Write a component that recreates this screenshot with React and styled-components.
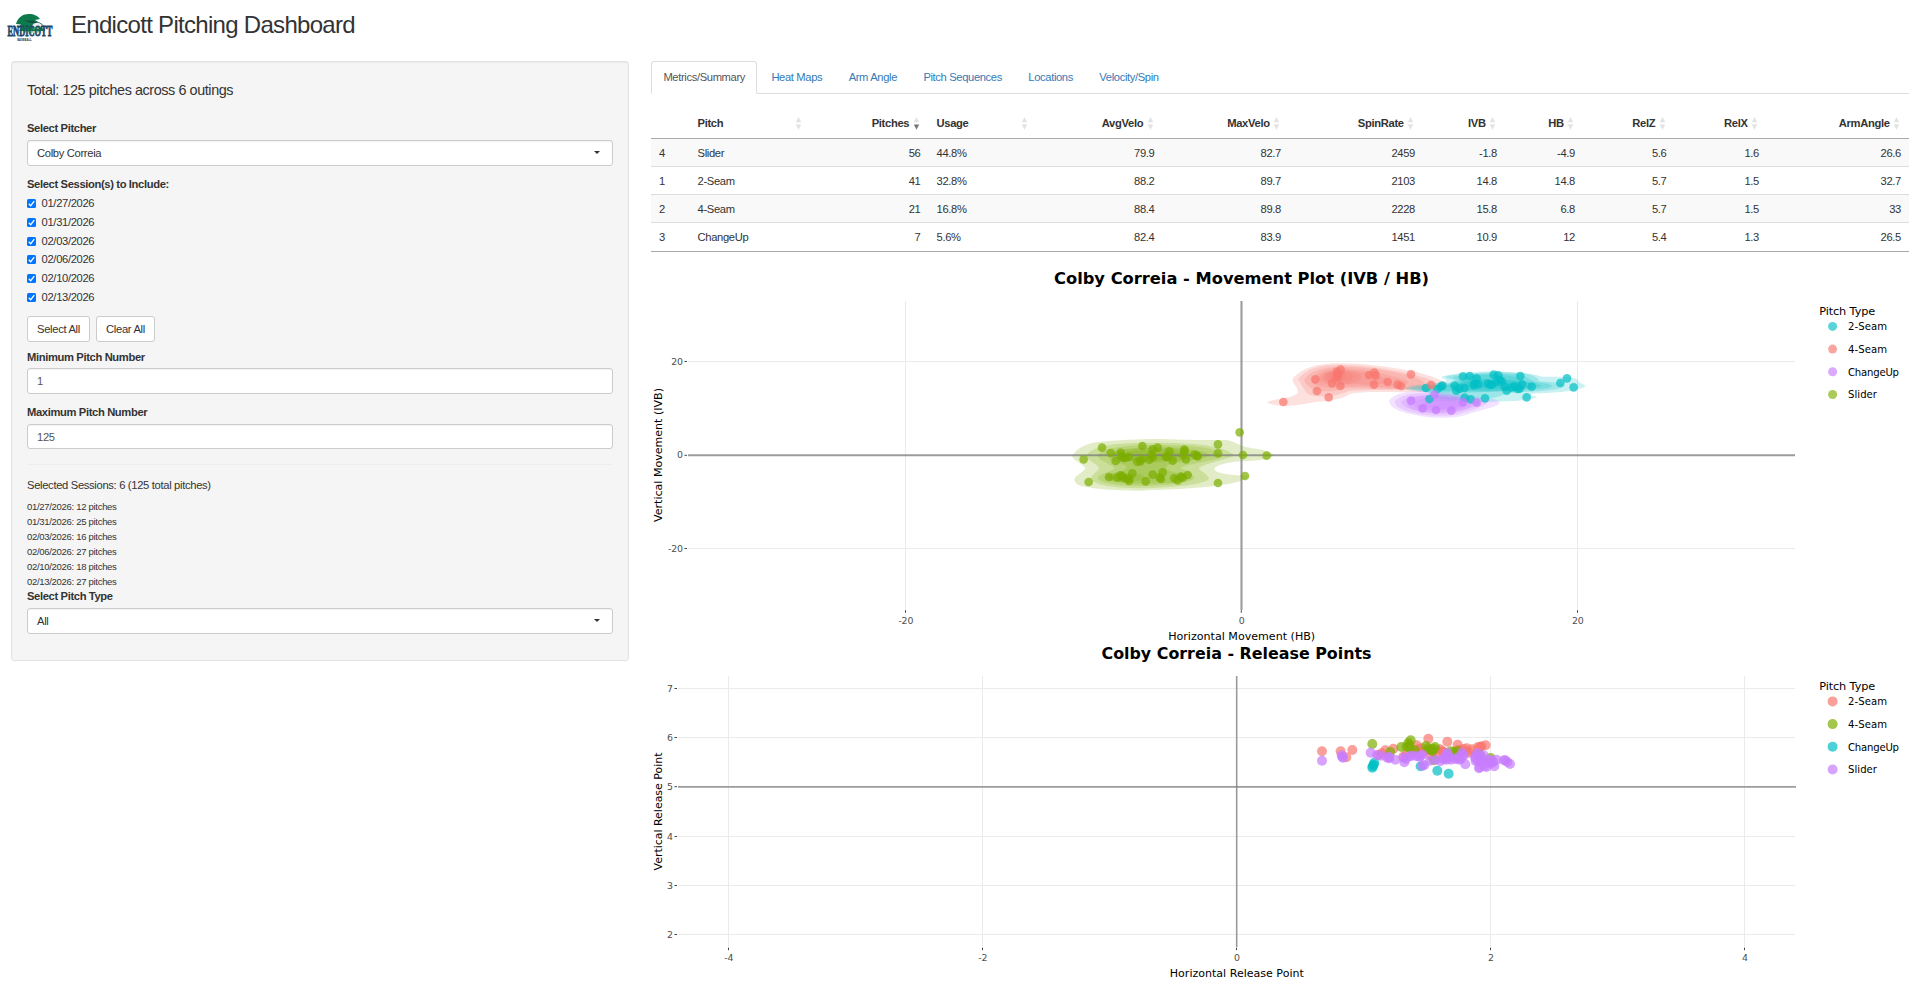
import React from "react";
import styled, { createGlobalStyle } from "styled-components";

const GlobalStyle = createGlobalStyle`
  *, *::before, *::after { box-sizing: border-box; }
  body {
    margin: 0;
    background: #fff;
    color: #333;
    font: 11.2px/16px "Liberation Sans", Arial, sans-serif;
    letter-spacing: -0.32px;
    overflow: hidden;
  }
`;

const Page = styled.div`
  width: 1918px;
  height: 982px;
  overflow: hidden;
`;

const Header = styled.header`
  display: flex;
  align-items: flex-start;
  height: 61px;
  padding-left: 7px;
`;

const Logo = styled.svg`
  width: 48px;
  height: 32px;
  margin-top: 13px;
  overflow: visible;
  letter-spacing: 0;
`;

const LogoName = styled.text`
  font-family: "Liberation Serif", serif;
  font-size: 14px;
  font-weight: 700;
  fill: #1f4668;
  stroke: #1f4668;
  stroke-width: 0.8px;
`;

const LogoSport = styled.text`
  font-family: "Liberation Sans", sans-serif;
  font-size: 3.6px;
  font-weight: 700;
  fill: #20334d;
`;

const Title = styled.h2`
  margin: 11px 0 0 16px;
  font-size: 24px;
  font-weight: 400;
  line-height: 27px;
  letter-spacing: -0.7px;
`;

const Columns = styled.main`
  display: grid;
  grid-template-columns: 618px 1258px;
  column-gap: 22px;
  align-items: start;
  padding-left: 11px;
`;

const Well = styled.form`
  display: flex;
  flex-direction: column;
  height: 600px;
  padding: 20px 15px 0;
  background: #f5f5f5;
  border: 1px solid #e3e3e3;
  border-radius: 3px;
  box-shadow: inset 0 1px 1px rgba(0, 0, 0, 0.05);
`;

const Total = styled.h4`
  margin: 0 0 21px;
  font-size: 14.4px;
  font-weight: 400;
  line-height: 17px;
  letter-spacing: -0.42px;
`;

const Label = styled.label`
  font-weight: 700;
  line-height: 16px;
  letter-spacing: -0.36px;
  margin: ${(p) => p.$margin || "0"};
`;

const Field = styled.div`
  display: flex;
  align-items: center;
  justify-content: space-between;
  flex: none;
  height: 25.6px;
  padding: 0 12px 0 9px;
  color: ${(p) => (p.$muted ? "#555" : "#333")};
  background: #fff;
  border: 1px solid #ccc;
  border-radius: 3px;
  box-shadow: inset 0 1px 1px rgba(0, 0, 0, 0.05);
`;

const Caret = styled.i`
  border: 3px solid transparent;
  border-top: 3px solid #333;
  border-bottom: 0;
  margin-top: -1px;
`;

const Sessions = styled.div`
  display: flex;
  flex-direction: column;
  gap: 2.7px;
  margin-top: 3px;
`;

const Session = styled.label`
  display: flex;
  align-items: center;
  gap: 5.6px;
  height: 16px;
  letter-spacing: -0.34px;
`;

const Check = styled.svg`
  width: 9px;
  height: 9px;
  margin-top: 1px;
  background: #0075ff;
  border-radius: 1.5px;
`;

const Buttons = styled.div`
  display: flex;
  gap: 6px;
  margin-top: 11.6px;
`;

const Button = styled.button`
  width: ${(p) => p.$width};
  height: 25.6px;
  padding: 0;
  color: #333;
  background: #fff;
  border: 1px solid #ccc;
  border-radius: 3px;
  font: inherit;
  letter-spacing: inherit;
`;

const Rule = styled.hr`
  width: 100%;
  margin: 14.6px 0 11.8px;
  border: 0;
  border-top: 1px solid #eee;
`;

const Counts = styled.div`
  margin-top: 6px;
  font-size: 9.5px;
  line-height: 15px;
  letter-spacing: -0.3px;
`;

const Tabs = styled.nav`
  display: flex;
  gap: 1.6px;
  height: 33px;
  border-bottom: 1px solid #ddd;
`;

const Tab = styled.a`
  height: 33px;
  padding: 7px 11.4px 0;
  letter-spacing: -0.36px;
  border: 1px solid ${(p) => (p.$active ? "#ddd" : "transparent")};
  border-bottom-color: ${(p) => (p.$active ? "#fff" : "transparent")};
  border-radius: 3px 3px 0 0;
  color: ${(p) => (p.$active ? "#555" : "#337ab7")};
`;

const Table = styled.table`
  width: 1258px;
  margin-top: 13px;
  table-layout: fixed;
  border-collapse: separate;
  border-spacing: 0;
  border-bottom: 1px solid #aaa;
`;

const Th = styled.th`
  height: 32px;
  padding: 1px 8px 0;
  border-bottom: 1px solid #aaa;
  text-align: left;
`;

const HeadCell = styled.div`
  display: flex;
  align-items: center;
  justify-content: ${(p) => (p.$left ? "space-between" : "flex-end")};
  gap: 3.3px;
`;

const SortIcon = styled.svg`
  width: 7px;
  height: 13px;
  flex: none;
  margin: 0 1px 0 0;
`;

const Row = styled.tr`
  background: ${(p) => (p.$odd ? "#f9f9f9" : "#fff")};
`;

const Td = styled.td`
  height: 28px;
  padding: 0 8px;
  border-bottom: ${(p) => (p.$last ? "0" : "1px solid #ddd")};
  text-align: ${(p) => (p.$left ? "left" : "right")};
`;

const Chart = styled.svg`
  display: block;
  width: 1258px;
  height: ${(p) => p.$height}px;
  font-family: "DejaVu Sans", Verdana, sans-serif;
  letter-spacing: 0;
`;

const ChartTitle = styled.text`
  font-size: 16px;
  font-weight: 700;
  text-anchor: middle;
  fill: #000;
`;

const AxisTitle = styled.text`
  font-size: 11.2px;
  text-anchor: middle;
  fill: #000;
`;

const TickLabel = styled.text`
  font-size: 9.4px;
  letter-spacing: -0.2px;
  text-anchor: ${(p) => p.$anchor};
  fill: #4d4d4d;
`;

const LegendTitle = styled.text`
  font-size: 11.3px;
  fill: #000;
`;

const LegendText = styled.text`
  font-size: 10.1px;
  fill: #000;
`;

const TEAL = "#00BFC4";
const RED = "#F8766D";
const PURPLE = "#C77CFF";
const GREEN = "#7CAE00";

const sessions = [
  ["01/27/2026", 12],
  ["01/31/2026", 25],
  ["02/03/2026", 16],
  ["02/06/2026", 27],
  ["02/10/2026", 18],
  ["02/13/2026", 27],
];

const tabs = ["Metrics/Summary", "Heat Maps", "Arm Angle", "Pitch Sequences", "Locations", "Velocity/Spin"];

const columns = [
  ["", 38.5],
  ["Pitch", 121],
  ["Pitches", 118],
  ["Usage", 108],
  ["AvgVelo", 126],
  ["MaxVelo", 126.5],
  ["SpinRate", 134],
  ["IVB", 82],
  ["HB", 78],
  ["RelZ", 91.5],
  ["RelX", 92.5],
  ["ArmAngle", 142],
];

const rows = [
  ["4", "Slider", "56", "44.8%", "79.9", "82.7", "2459", "-1.8", "-4.9", "5.6", "1.6", "26.6"],
  ["1", "2-Seam", "41", "32.8%", "88.2", "89.7", "2103", "14.8", "14.8", "5.7", "1.5", "32.7"],
  ["2", "4-Seam", "21", "16.8%", "88.4", "89.8", "2228", "15.8", "6.8", "5.7", "1.5", "33"],
  ["3", "ChangeUp", "7", "5.6%", "82.4", "83.9", "1451", "10.9", "12", "5.4", "1.3", "26.5"],
];

const isLeft = (i) => i === 0 || i === 1 || i === 3;

// Point lists are in thirds of a pixel, relative to the group they are drawn in.
const sliderMove = [
  [71,118],[86,186],[126,83],[152,99],[167,123],[182,98],[184,108],[189,114],[196,114],[207,111],[247,78],[278,88],[293,83],[232,125],[241,124],[246,117],[268,119],[275,105],[278,112],[328,94],[318,111],[323,110],[338,122],[373,89],[374,94],[369,105],[378,118],[404,104],[410,107],[413,109],[474,73],[474,100],[539,37],[549,105],[620,107],[555,168],[474,189],
  [147,171],[172,173],[182,166],[185,168],[190,173],[201,177],[208,176],[207,183],[217,160],[257,184],[278,164],[308,157],[299,173],[303,177],[343,175],[353,181],[363,170],[368,173],[383,165],
];
const fourMove = [
  [70,156],[171,123],[206,142],[166,88],[216,100],[230,83],[232,79],[231,65],[235,73],[242,59],[241,108],[327,75],[343,68],[347,77],[342,104],[383,96],[413,104],[423,108],[453,73],[513,105],
];
const twoMove = [
  [498,114],[508,147],[533,117],[543,110],[547,107],[584,107],[589,122],[599,116],[614,114],[609,79],[629,78],[650,85],[641,106],[644,101],[655,103],[684,101],[690,105],[696,104],[701,74],[715,76],[709,96],[720,90],[725,94],[734,110],[740,122],[755,113],[764,109],[773,117],[779,116],[786,103],[781,78],[815,110],[800,142],[675,145],[632,148],[614,143],[901,99],[921,85],[941,112],
];
const changeMove = [[453,152],[488,175],[528,180],[574,182],[524,134],[609,157],[650,158]];

const twoRel = [
  [66,79],[122,79],[157,75],[139,97],[256,76],[280,71],[350,61],[385,41],[442,50],[473,59],[500,70],[499,80],[533,67],[544,64],[557,61],[540,66],[515,73],[425,78],[414,84],[420,73],[392,92],[245,85],[310,95],[355,73],[365,70],[475,75],[480,76],[490,72],[508,83],[526,91],[385,75],[400,78],[430,80],[236,90],[320,88],[340,84],[370,80],[487,81],
];
const fourRel = [
  [217,57],[304,66],[332,46],[325,54],[328,60],[320,65],[330,70],[378,63],[385,70],[393,75],[405,66],[400,71],[397,78],[452,79],[462,81],[472,79],[271,81],[345,76],[572,99],[540,90],[401,106],
];
const changeRel = [[217,128],[223,113],[221,119],[218,124],[362,124],[412,137],[446,146]];
const sliderRel = [
  [66,107],[125,91],[127,96],[129,98],[212,83],[231,90],[243,92],[262,98],[268,100],[267,95],[286,104],[311,98],[313,112],[318,102],[329,94],[336,92],[350,94],[361,93],[367,89],[359,95],[368,122],[373,120],[390,107],[407,104],[421,109],[429,101],[437,97],[441,88],[442,83],[444,92],[450,97],[453,104],[440,104],[434,102],[467,102],[475,97],[483,101],[488,89],[486,83],[491,92],[478,104],[496,118],[525,98],[533,84],[530,89],[527,108],[533,108],[540,109],[537,130],[539,127],[542,94],[551,91],[546,101],[554,124],[562,115],[570,109],[575,115],[570,104],[583,124],[590,104],[612,106],[616,106],[622,111],[630,117],[560,126],[580,110],
];

function Points({ points, color, r, opacity }) {
  return (
    <g fill={color} fillOpacity={opacity}>
      {points.map(([x, y], i) => (
        <circle key={i} cx={x} cy={y} r={r} />
      ))}
    </g>
  );
}

function Blobs({ shapes, color }) {
  return (
    <g fill={color} fillOpacity={0.22}>
      {shapes.map((d, i) => (
        <path key={i} d={d} />
      ))}
    </g>
  );
}

const ellipse = (cx, cy, rx, ry) =>
  `M${cx - rx} ${cy}C${cx - rx} ${cy - ry * 0.7} ${cx - rx * 0.6} ${cy - ry} ${cx} ${cy - ry}S${cx + rx} ${cy - ry * 0.6} ${cx + rx} ${cy}S${cx + rx * 0.6} ${cy + ry} ${cx} ${cy + ry}S${cx - rx} ${cy + ry * 0.7} ${cx - rx} ${cy}Z`;

const sliderShapes = [
  "M36 109C50 84 80 70 112 66C180 60 250 56 300 57C370 60 450 60 500 60C525 66 545 78 560 82C600 88 625 92 643 106C625 119 590 122 545 124C490 128 465 138 463 147C468 160 500 164 565 168C555 182 525 190 475 196C420 206 330 208 240 212C160 212 80 205 55 195C40 185 40 175 52 166C65 158 74 150 76 145C70 132 40 122 36 109Z",
  "M78 108C90 88 120 78 170 72C240 66 330 68 400 72C460 76 510 90 522 106C510 118 440 127 415 145C425 155 445 165 447 176C435 192 360 202 240 205C150 205 95 192 93 175C98 160 115 154 117 144C112 130 80 122 78 108Z",
  "M112 107C125 88 170 80 230 76C310 74 400 76 450 86C475 94 490 104 485 110C470 122 385 130 362 143C375 153 402 160 403 174C390 192 300 198 230 198C150 196 112 186 113 172C120 160 165 152 163 144C155 132 115 122 112 107Z",
  "M146 106C160 90 200 84 270 82C350 80 420 88 447 102C450 116 390 122 330 132C310 142 310 150 350 158C385 168 385 182 350 187C280 194 190 192 155 184C128 175 130 164 170 157C205 150 210 140 180 130C155 122 143 116 146 106Z",
  ellipse(278, 106, 122, 21),
  ellipse(270, 106, 90, 15),
  ellipse(198, 172, 55, 13),
];

const fourShapes = [
  "M20 157C45 145 100 146 112 130C120 110 88 98 100 83C130 52 180 38 245 40C330 40 400 54 460 64C510 76 535 88 560 98C575 112 540 124 480 126C400 128 300 122 270 132C240 152 190 153 155 158C100 168 50 174 20 157Z",
  "M114 88C140 54 190 42 250 45C340 46 420 64 475 78C515 88 540 98 530 112C480 126 330 116 265 123C240 138 170 145 144 132C130 118 125 104 114 88Z",
  "M133 88C150 62 195 50 245 50C330 50 410 66 460 80C495 92 505 106 480 114C400 122 310 112 250 116C210 128 165 126 150 112C140 102 132 98 133 88Z",
  "M156 88C170 66 200 54 245 54C320 58 400 76 440 92C455 106 420 116 370 112C310 108 260 108 225 112C180 116 152 104 156 88Z",
  "M174 86C185 66 210 58 245 59C310 64 360 76 385 92C380 106 330 104 285 102C240 104 180 108 174 86Z",
  ellipse(246, 82, 58, 20),
  ellipse(238, 80, 42, 16),
  ellipse(232, 78, 26, 12),
];

const changeShapes = [
  "M387 153C400 130 440 124 490 122C560 124 640 140 700 148C720 152 722 160 715 164C690 176 650 182 620 194C580 206 520 206 480 198C430 188 390 178 387 153Z",
  "M405 153C420 134 460 128 500 128C570 134 640 146 680 152C692 162 650 176 610 188C560 204 490 196 460 188C420 178 402 168 405 153Z",
  "M425 154C440 138 480 134 515 136C580 142 630 148 660 156C660 166 620 178 590 185C540 197 480 188 455 178C430 170 422 162 425 154Z",
  ellipse(540, 161, 98, 26),
  ellipse(540, 162, 78, 20),
  ellipse(545, 163, 56, 14),
];

const twoShapes = [
  "M435 115C460 100 530 104 560 94C560 86 540 84 545 80C590 68 660 64 720 65C790 66 820 72 845 80C880 82 935 76 955 90C950 98 970 100 977 108C960 122 900 128 830 130C790 134 830 138 832 142C800 154 700 156 640 156C560 156 500 152 495 145C500 135 520 130 500 126C470 122 445 124 435 115Z",
  "M450 115C490 104 550 104 585 96C585 86 560 86 556 80C620 66 720 66 790 70C820 74 840 86 835 94C890 96 915 102 913 108C900 124 800 124 740 130C720 140 690 150 640 150C580 152 520 146 520 140C540 128 460 124 450 115Z",
  "M475 115C510 106 570 106 600 98C600 90 575 86 580 80C640 70 720 68 780 74C810 82 810 92 830 96C860 100 880 104 875 110C850 122 700 126 600 128C540 128 480 124 475 115Z",
  "M515 115C550 106 590 104 620 96C610 86 600 84 620 80C680 70 750 74 770 82C780 92 830 98 845 108C820 120 700 126 620 124C570 124 520 122 515 115Z",
  ellipse(690, 105, 125, 17),
  ellipse(690, 103, 95, 12),
];

const gx1 = [[-20, 905.5], [0, 1241.3], [20, 1577.5]];
const gy1 = [[20, 361.5], [0, 455.3], [-20, 548.5]];
const gx2 = [[-4, 728.5], [-2, 982.5], [0, 1236.5], [2, 1490.5], [4, 1744.5]];
const gy2 = [[7, 688.5], [6, 737.5], [5, 786.7], [4, 836.5], [3, 885.5], [2, 934.5]];

function Grid({ xs, ys, left, top, bottom }) {
  return (
    <>
      <g stroke="#ebebeb">
        {xs.map(([v, x]) => <line key={v} x1={x} x2={x} y1={top} y2={bottom} />)}
        {ys.map(([v, y]) => <line key={v} x1={left} x2={1795} y1={y} y2={y} />)}
      </g>
      <g stroke="#444">
        {xs.map(([v, x]) => <line key={v} x1={x} x2={x} y1={bottom + 0.7} y2={bottom + 3.2} />)}
        {ys.map(([v, y]) => <line key={v} x1={left - 3.5} x2={left - 1} y1={y} y2={y} />)}
      </g>
      {xs.map(([v, x]) => <TickLabel key={v} $anchor="middle" x={x + 0.3} y={bottom + 14}>{v}</TickLabel>)}
      {ys.map(([v, y]) => <TickLabel key={v} $anchor="end" x={left - 5.2} y={y + 3}>{v}</TickLabel>)}
    </>
  );
}

function Legend({ y, r, opacity, items }) {
  return (
    <g>
      <LegendTitle x={1819.2} y={y + 4} textLength={56}>Pitch Type</LegendTitle>
      {items.map(([name, color, width], i) => (
        <g key={name}>
          <circle cx={1832.6} cy={y + 15.4 + i * 22.7} r={r} fill={color} fillOpacity={opacity} />
          <LegendText x={1848} y={y + 19.3 + i * 22.7} textLength={width}>{name}</LegendText>
        </g>
      ))}
    </g>
  );
}

function MovementChart() {
  return (
    <Chart $height={391} viewBox="651 252 1258 391">
      <ChartTitle x={1241.5} y={284} textLength={375} lengthAdjust="spacingAndGlyphs">Colby Correia - Movement Plot (IVB / HB)</ChartTitle>
      <Grid xs={gx1} ys={gy1} left={688} top={301} bottom={609.5} />
      <g transform="translate(1260 350) scale(0.33333)">
        <Blobs shapes={fourShapes} color={RED} />
        <Blobs shapes={twoShapes} color={TEAL} />
        <Blobs shapes={changeShapes} color={PURPLE} />
      </g>
      <g transform="translate(1060 420) scale(0.33333)">
        <Blobs shapes={sliderShapes} color={GREEN} />
      </g>
      <g stroke="#7f7f7f" strokeOpacity={0.75} strokeWidth={2.1}>
        <line x1={688} x2={1795} y1={455.2} y2={455.2} />
        <line x1={1241.5} x2={1241.5} y1={301} y2={610} />
      </g>
      <g transform="translate(1260 350) scale(0.33333)">
        <Points points={twoMove} color={TEAL} r={13} opacity={0.7} />
        <Points points={fourMove} color={RED} r={13} opacity={0.7} />
        <Points points={changeMove} color={PURPLE} r={13} opacity={0.75} />
      </g>
      <g transform="translate(1060 420) scale(0.33333)">
        <Points points={sliderMove} color={GREEN} r={13} opacity={0.7} />
      </g>
      <AxisTitle x={1241.7} y={640} textLength={147} lengthAdjust="spacingAndGlyphs">Horizontal Movement (HB)</AxisTitle>
      <AxisTitle transform="translate(662 455) rotate(-90)" textLength={134} lengthAdjust="spacingAndGlyphs">Vertical Movement (IVB)</AxisTitle>
      <Legend
        y={311}
        r={4.5}
        opacity={0.65}
        items={[["2-Seam", TEAL, 39], ["4-Seam", RED, 39], ["ChangeUp", PURPLE, 51], ["Slider", GREEN, 29]]}
      />
    </Chart>
  );
}

function ReleaseChart() {
  return (
    <Chart $height={339} viewBox="651 643 1258 339">
      <ChartTitle x={1236.5} y={659} textLength={270} lengthAdjust="spacingAndGlyphs">Colby Correia - Release Points</ChartTitle>
      <Grid xs={gx2} ys={gy2} left={678} top={676} bottom={947} />
      <g stroke="#7f7f7f" strokeOpacity={0.75} strokeWidth={1.6}>
        <line x1={678} x2={1796} y1={786.9} y2={786.9} />
        <line x1={1236.7} x2={1236.7} y1={676} y2={947} />
      </g>
      <g transform="translate(1300 725) scale(0.33333)">
        <Points points={twoRel} color={RED} r={15} opacity={0.7} />
        <Points points={fourRel} color={GREEN} r={15} opacity={0.7} />
        <Points points={changeRel} color={TEAL} r={15} opacity={0.7} />
        <Points points={sliderRel} color={PURPLE} r={15} opacity={0.7} />
      </g>
      <AxisTitle x={1236.8} y={976.5} textLength={134} lengthAdjust="spacingAndGlyphs">Horizontal Release Point</AxisTitle>
      <AxisTitle transform="translate(662 811.5) rotate(-90)" textLength={118} lengthAdjust="spacingAndGlyphs">Vertical Release Point</AxisTitle>
      <Legend
        y={686}
        r={5}
        opacity={0.7}
        items={[["2-Seam", RED, 39], ["4-Seam", GREEN, 39], ["ChangeUp", TEAL, 51], ["Slider", PURPLE, 29]]}
      />
    </Chart>
  );
}

function SchoolLogo() {
  return (
    <Logo viewBox="0 0 48 32">
      <path d="M9 11C11 4 16 1 22 1C27 1 31 3 33 6L28 7L32 9.5C36 11 38 13.5 37.5 18H12L15 14.5L10.5 15L14 11.5Z" fill="#0d7a4b" />
      <path d="M25 12.5C27 9 31 8.5 33.5 10.5C36.5 12 38 14.5 37.5 17.5L34 14.5L31 16.5L26 17Z" fill="#e9eeee" stroke="#24415f" strokeWidth="0.6" />
      <path d="M17 7.5L26 7.5L31 10L24 10Z" fill="#14503f" />
      <g transform="translate(0.5 23.3) scale(0.6 1)">
        <LogoName>ENDICOTT</LogoName>
      </g>
      <path d="M13 14H34V18L30 20L27 18L24 21L20 18L17 20Z" fill="#0d7a4b" opacity="0.5" />
      <g transform="translate(10.2 27.8) scale(0.74 1)">
        <LogoSport>BASEBALL</LogoSport>
      </g>
    </Logo>
  );
}

function Sort({ active }) {
  return (
    <SortIcon viewBox="0 0 7 13">
      <path d="M3.5 0L6.2 5.3H0.8Z" fill="#e2e2e2" />
      <path d="M0.8 7.5H6.2L3.5 12.8Z" fill={active ? "#777" : "#e2e2e2"} />
    </SortIcon>
  );
}

function Sidebar() {
  return (
    <Well>
      <Total>Total: 125 pitches across 6 outings</Total>
      <Label $margin="0 0 4.2px">Select Pitcher</Label>
      <Field>Colby Correia<Caret /></Field>
      <Label $margin="10.4px 0 0">Select Session(s) to Include:</Label>
      <Sessions>
        {sessions.map(([date]) => (
          <Session key={date}>
            <Check viewBox="0 0 9 9">
              <path d="M1.8 4.8L3.7 6.7L7.3 2.2" fill="none" stroke="#fff" strokeWidth="1.3" />
            </Check>
            {date}
          </Session>
        ))}
      </Sessions>
      <Buttons>
        <Button type="button" $width="63px">Select All</Button>
        <Button type="button" $width="59px">Clear All</Button>
      </Buttons>
      <Label $margin="7.4px 0 3px">Minimum Pitch Number</Label>
      <Field $muted>1</Field>
      <Label $margin="10.4px 0 3.6px">Maximum Pitch Number</Label>
      <Field $muted>125</Field>
      <Rule />
      <div>Selected Sessions: 6 (125 total pitches)</div>
      <Counts>
        {sessions.map(([date, n]) => <div key={date}>{date}: {n} pitches</div>)}
      </Counts>
      <Label $margin="-0.4px 0 4px">Select Pitch Type</Label>
      <Field>All<Caret /></Field>
    </Well>
  );
}

function Metrics() {
  return (
    <Table>
      <colgroup>
        {columns.map(([name, w]) => <col key={name} width={w} />)}
      </colgroup>
      <thead>
        <tr>
          {columns.map(([name], i) => (
            <Th key={name}>
              {name && <HeadCell $left={isLeft(i)}>{name}<Sort active={name === "Pitches"} /></HeadCell>}
            </Th>
          ))}
        </tr>
      </thead>
      <tbody>
        {rows.map((row, r) => (
          <Row key={row[0]} $odd={r % 2 === 0}>
            {row.map((cell, i) => <Td key={i} $left={isLeft(i)} $last={r === 3}>{cell}</Td>)}
          </Row>
        ))}
      </tbody>
    </Table>
  );
}

export default function App() {
  return (
    <Page>
      <GlobalStyle />
      <Header>
        <SchoolLogo />
        <Title>Endicott Pitching Dashboard</Title>
      </Header>
      <Columns>
        <Sidebar />
        <section>
          <Tabs>
            {tabs.map((t, i) => <Tab key={t} $active={i === 0}>{t}</Tab>)}
          </Tabs>
          <Metrics />
          <MovementChart />
          <ReleaseChart />
        </section>
      </Columns>
    </Page>
  );
}
